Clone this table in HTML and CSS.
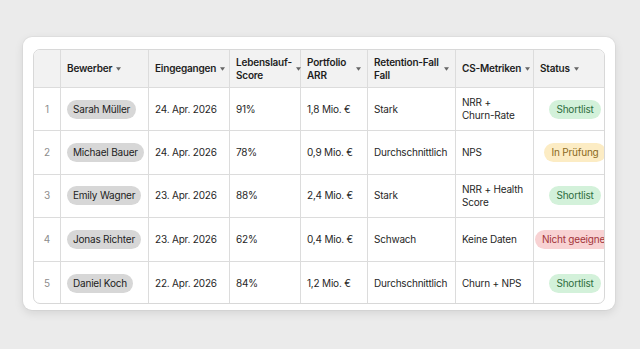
FILE: index.html
```html
<!DOCTYPE html>
<html lang="de">
<head>
<meta charset="utf-8">
<title>Bewerber</title>
<link rel="stylesheet" href="styles.css">
</head>
<body>
<main class="card">
  <div class="table-wrap">
    <table class="grid">
      <colgroup>
        <col class="c-num"><col class="c-name"><col class="c-date"><col class="c-score"><col class="c-arr"><col class="c-ret"><col class="c-cs"><col class="c-status">
      </colgroup>
      <thead>
        <tr>
          <th></th>
          <th><div class="th"><span class="lbl">Bewerber</span><svg class="caret" viewBox="0 0 6 4"><path d="M0 0H6L3 4Z"/></svg></div></th>
          <th><div class="th"><span class="lbl">Eingegangen</span><svg class="caret" viewBox="0 0 6 4"><path d="M0 0H6L3 4Z"/></svg></div></th>
          <th><div class="th"><span class="lbl">Lebenslauf-Score</span><svg class="caret" viewBox="0 0 6 4"><path d="M0 0H6L3 4Z"/></svg></div></th>
          <th><div class="th"><span class="lbl">Portfolio ARR</span><svg class="caret" viewBox="0 0 6 4"><path d="M0 0H6L3 4Z"/></svg></div></th>
          <th><div class="th"><span class="lbl"><span class="nw">Retention-Fall</span> Fall</span><svg class="caret" viewBox="0 0 6 4"><path d="M0 0H6L3 4Z"/></svg></div></th>
          <th><div class="th"><span class="lbl nw">CS-Metriken</span><svg class="caret" viewBox="0 0 6 4"><path d="M0 0H6L3 4Z"/></svg></div></th>
          <th><div class="th"><span class="lbl">Status</span><svg class="caret" viewBox="0 0 6 4"><path d="M0 0H6L3 4Z"/></svg></div></th>
        </tr>
      </thead>
      <tbody>
        <tr>
          <td class="num">1</td>
          <td><span class="chip">Sarah Müller</span></td>
          <td>24. Apr. 2026</td>
          <td>91%</td>
          <td>1,8 Mio. €</td>
          <td>Stark</td>
          <td>NRR + <span class="nw">Churn-Rate</span></td>
          <td><div class="status"><span class="badge ok">Shortlist</span></div></td>
        </tr>
        <tr>
          <td class="num">2</td>
          <td><span class="chip">Michael Bauer</span></td>
          <td>24. Apr. 2026</td>
          <td>78%</td>
          <td>0,9 Mio. €</td>
          <td>Durchschnittlich</td>
          <td>NPS</td>
          <td><div class="status"><span class="badge wait">In Prüfung</span></div></td>
        </tr>
        <tr>
          <td class="num">3</td>
          <td><span class="chip">Emily Wagner</span></td>
          <td>23. Apr. 2026</td>
          <td>88%</td>
          <td>2,4 Mio. €</td>
          <td>Stark</td>
          <td>NRR + Health Score</td>
          <td><div class="status"><span class="badge ok">Shortlist</span></div></td>
        </tr>
        <tr>
          <td class="num">4</td>
          <td><span class="chip">Jonas Richter</span></td>
          <td>23. Apr. 2026</td>
          <td>62%</td>
          <td>0,4 Mio. €</td>
          <td>Schwach</td>
          <td>Keine Daten</td>
          <td><div class="status"><span class="badge no">Nicht geeignet</span></div></td>
        </tr>
        <tr>
          <td class="num">5</td>
          <td><span class="chip">Daniel Koch</span></td>
          <td>22. Apr. 2026</td>
          <td>84%</td>
          <td>1,2 Mio. €</td>
          <td>Durchschnittlich</td>
          <td>Churn + NPS</td>
          <td><div class="status"><span class="badge ok">Shortlist</span></div></td>
        </tr>
      </tbody>
    </table>
  </div>
</main>
</body>
</html>
```
FILE: styles.css
```css
* { box-sizing: border-box; }
html, body { margin: 0; padding: 0; }
body {
  background: #ebebeb;
  font-family: Inter, "Noto Sans", "Liberation Sans", sans-serif;
  font-size: 10px;
  line-height: 13px;
  letter-spacing: -0.2px;
  color: #262626;
  min-height: 100vh;
  padding: 0 2px 2px 0;
  display: flex;
  align-items: center;
  justify-content: center;
}
.card {
  width: 592px;
  height: 273px;
  background: #fff;
  border-radius: 9px;
  padding: 12px 10px 6px 10px;
  box-shadow: 0 3px 10px rgba(0,0,0,0.10), 0 0 0 1px rgba(0,0,0,0.03);
}
.table-wrap {
  border: 1px solid #d8d8d8;
  border-radius: 7px;
  overflow: hidden;
  height: 255px;
}
.grid {
  table-layout: fixed;
  width: 582px;
  border-collapse: separate;
  border-spacing: 0;
}
.c-num { width: 27px; }
.c-name { width: 88px; }
.c-date { width: 81px; }
.c-score { width: 71px; }
.c-arr { width: 67px; }
.c-ret { width: 88px; }
.c-cs { width: 78px; }
.c-status { width: 82px; }
th, td {
  border-right: 1px solid #dcdcdc;
  border-bottom: 1px solid #dcdcdc;
  padding: 0 6px;
  text-align: left;
  vertical-align: middle;
}
th:last-child, td:last-child { border-right: 0; }
tbody tr:last-child td { border-bottom: 0; }
th {
  background: #f2f2f2;
  height: 38px;
  font-weight: 600;
  color: #1e1e1e;
}
.th {
  display: flex;
  align-items: center;
  gap: 4px;
}
.nw { white-space: nowrap; }
.caret {
  width: 5px;
  height: 4px;
  flex: none;
  fill: #666;
}
td { height: 43.4px; }
td.num { text-align: center; color: #8d8d8d; padding: 0; }
.chip {
  display: inline-block;
  background: #d7d7d7;
  border-radius: 10px;
  padding: 3px 6px;
  white-space: nowrap;
  color: #222;
}
.status {
  display: flex;
  justify-content: center;
}
.badge {
  flex: none;
  white-space: nowrap;
  border-radius: 10px;
  padding: 3px 7px;
}
.ok { background: #d3f1da; color: #2f6e3e; }
.wait { background: #fcecc4; color: #8a6a22; }
.no { background: #f8d2d3; color: #a3343a; }
```
